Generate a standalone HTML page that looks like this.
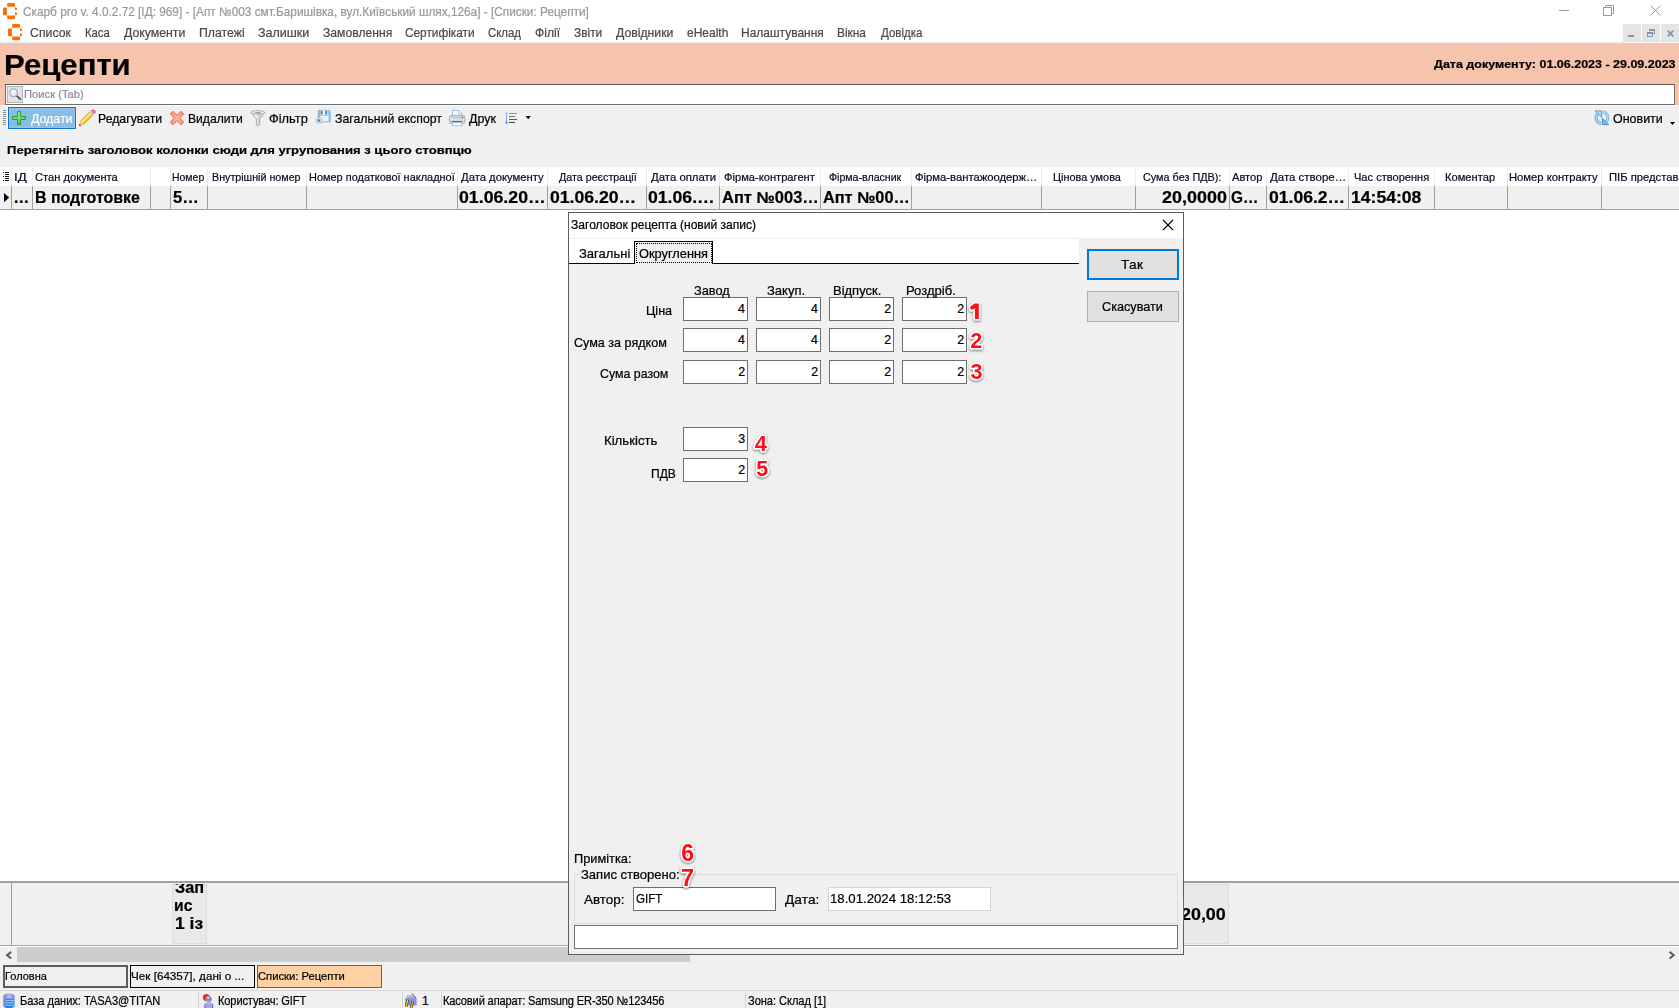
<!DOCTYPE html>
<html lang="uk"><head><meta charset="utf-8"><title>Скарб pro</title>
<style>
html,body{margin:0;padding:0;}
body{width:1679px;height:1008px;position:relative;overflow:hidden;background:#f0f0f0;font-family:"Liberation Sans",sans-serif;font-size:12px;color:#000;}
div,span,svg{position:absolute;box-sizing:border-box;}
.t{white-space:pre;font-family:"Liberation Sans",sans-serif;-webkit-text-stroke:0.22px currentColor;}
#titlebar{left:0;top:0;width:1679px;height:22px;background:#fff;}
#menubar{left:0;top:22px;width:1679px;height:19px;background:#fff;}
#menusep{left:0;top:41px;width:1679px;height:2px;background:#f1f3f6;}
#banner{left:0;top:43px;width:1679px;height:62px;background:#f6c3ac;}
#search{left:5px;top:84px;width:1670px;height:21px;background:#fff;border:1px solid #6e6e6e;border-top-color:#5a5a5a;}
#sicon{left:7px;top:86px;width:16px;height:17px;background:#e4e4e4;border:1px solid #b4b4b4;}
#toolbar{left:0;top:105px;width:1679px;height:62px;background:#f0f0f0;border-top:1px solid #fafafa;}
#addbtn{left:8px;top:107px;width:68px;height:22px;background:#89bce6;border:1px solid #0873d6;box-shadow:inset 0 0 0 1px #96c4ea,0 0 0 1px #fbf8f3;}
#ghead{left:0;top:167px;width:1679px;height:19px;background:#fff;}
.hs{top:167px;width:1px;height:19px;background:#ececec;}
#grow{left:0;top:186px;width:1679px;height:24px;background:#f0f0f0;border-bottom:1px solid #a0a0a0;}
.rs{top:186px;width:1px;height:23px;background:#a0a0a0;}
#gwhite{left:0;top:210px;width:1679px;height:671px;background:#fff;}
#foot{left:0;top:881px;width:1679px;height:65px;background:#f0f0f0;border-top:2px solid #a0a0a0;border-bottom:1px solid #a8a8a8;}
.fc{background:#e7e9ea;border:1px solid #dcdcdc;}
#hscroll{left:0;top:946px;width:1679px;height:17px;background:#f0f0f0;border-top:1px solid #fbfbfb;}
#hthumb{left:17px;top:947px;width:673px;height:15px;background:#cdcdcd;}
.tab{top:965px;height:23px;background:#f0f0f0;}
#status{left:0;top:990px;width:1679px;height:18px;background:#f0f0f0;border-top:1px solid #d7d7d7;}
.ss{top:992px;width:1px;height:16px;background:#d2d2d2;}
.mdi{top:24px;height:18px;background:#e5e5e5;}
/* dialog */
#dlg{left:568px;top:212px;width:616px;height:743px;background:#f0f0f0;border:1px solid #5e5e5e;}
#dtitle{left:569px;top:213px;width:614px;height:25px;background:#fff;}
#dtabs{left:569px;top:238px;width:510px;height:25px;background:#fff;border-top:1px solid #efefef;}
#dtabline{left:569px;top:263px;width:510px;height:1px;background:#000;}
#tabsel{left:634px;top:241px;width:79px;height:23px;background:#f0f0f0;border:1px solid #000;border-bottom:none;}
#tabfocus{left:636px;top:243px;width:76px;height:20px;border:1px dotted #000;border-radius:1px;}
.in{width:65px;height:24px;background:#fff;border:1px solid #6e6e6e;}
.btn{left:1087px;width:92px;height:31px;background:#e1e1e1;border:1px solid #adadad;}
.num{font-weight:700;color:#ee1c25;text-shadow:-1px -1px 0 #fff,1px -1px 0 #fff,-1px 1px 0 #fff,1px 1px 0 #fff,0 -1.5px 0 #fff,0 1.5px 0 #fff,-1.5px 0 0 #fff,1.5px 0 0 #fff,1px 2.5px 2px rgba(0,0,0,.45);}
.numsvg{filter:drop-shadow(0.5px 1.6px 1.1px rgba(0,0,0,.5));overflow:visible;}

</style></head>
<body>
<div id="titlebar"></div>
<div id="menubar"></div>
<div id="menusep"></div>
<div id="banner"></div>
<div id="search"></div>
<div id="sicon"></div>
<div id="toolbar"></div>
<div id="addbtn"></div>
<div id="ghead"></div>
<div id="grow"></div>
<div id="gwhite"></div>
<div class="hs" style="left:11px"></div><div class="rs" style="left:11px"></div><div class="hs" style="left:32px"></div><div class="rs" style="left:32px"></div><div class="hs" style="left:150px"></div><div class="rs" style="left:150px"></div><div class="hs" style="left:170px"></div><div class="rs" style="left:170px"></div><div class="hs" style="left:207px"></div><div class="rs" style="left:207px"></div><div class="hs" style="left:306px"></div><div class="rs" style="left:306px"></div><div class="hs" style="left:457px"></div><div class="rs" style="left:457px"></div><div class="hs" style="left:547px"></div><div class="rs" style="left:547px"></div><div class="hs" style="left:646px"></div><div class="rs" style="left:646px"></div><div class="hs" style="left:719px"></div><div class="rs" style="left:719px"></div><div class="hs" style="left:820px"></div><div class="rs" style="left:820px"></div><div class="hs" style="left:911px"></div><div class="rs" style="left:911px"></div><div class="hs" style="left:1041px"></div><div class="rs" style="left:1041px"></div><div class="hs" style="left:1135px"></div><div class="rs" style="left:1135px"></div><div class="hs" style="left:1229px"></div><div class="rs" style="left:1229px"></div><div class="hs" style="left:1266px"></div><div class="rs" style="left:1266px"></div><div class="hs" style="left:1348px"></div><div class="rs" style="left:1348px"></div><div class="hs" style="left:1434px"></div><div class="rs" style="left:1434px"></div><div class="hs" style="left:1507px"></div><div class="rs" style="left:1507px"></div><div class="hs" style="left:1601px"></div><div class="rs" style="left:1601px"></div>
<div id="foot"></div>
<div class="fc" style="left:172px;top:884px;width:35px;height:60px"></div>
<div class="fc" style="left:1140px;top:884px;width:89px;height:60px"></div>
<div style="left:11px;top:883px;width:1px;height:62px;background:#a0a0a0"></div>
<div id="hscroll"></div>
<div id="hthumb"></div>
<div class="tab" style="left:3px;width:125px;border:2px solid #5c5c5c"></div>
<div class="tab" style="left:130px;width:125px;border:1px solid #000"></div>
<div class="tab" style="left:257px;width:125px;background:#ffd1a2;border:1px solid #0b76d8;box-shadow:0 0 0 1px #fbf8f3"></div>
<div id="status"></div>
<div class="ss" style="left:198px"></div>
<div class="ss" style="left:402px"></div>
<div class="ss" style="left:441px"></div>
<div class="ss" style="left:745px"></div>
<div class="mdi" style="left:1623px;width:18px"></div>
<div class="mdi" style="left:1642px;width:18px"></div>
<div class="mdi" style="left:1661px;width:18px"></div>
<svg style="left:2.8px;top:2.8px" width="15" height="17" viewBox="0 0 15 17"><g fill="#ff6d00"><path d="M4.2 1.3Q4.2 0 5.5 0H10.7Q12 0 12 1.3V3.7H4.2Z"/><path d="M1.3 4.4H3.9V12.2H1.3Q0 12.2 0 10.9V5.7Q0 4.4 1.3 4.4Z"/><path d="M4.2 12.5H12V14.9Q12 16.2 10.7 16.2H5.5Q4.2 16.2 4.2 14.9Z"/><path d="M12 4.4H12.9Q14.2 4.4 14.2 5.7Q14.2 7 12.9 7H12Z"/><path d="M12 9.4H12.9Q14.2 9.4 14.2 10.8Q14.2 12.2 12.9 12.2H12Z"/></g></svg><svg style="left:7.85px;top:23.9px" width="15" height="17" viewBox="0 0 15 17"><g fill="#ff6d00"><path d="M4.2 1.3Q4.2 0 5.5 0H10.7Q12 0 12 1.3V3.7H4.2Z"/><path d="M1.3 4.4H3.9V12.2H1.3Q0 12.2 0 10.9V5.7Q0 4.4 1.3 4.4Z"/><path d="M4.2 12.5H12V14.9Q12 16.2 10.7 16.2H5.5Q4.2 16.2 4.2 14.9Z"/><path d="M12 4.4H12.9Q14.2 4.4 14.2 5.7Q14.2 7 12.9 7H12Z"/><path d="M12 9.4H12.9Q14.2 9.4 14.2 10.8Q14.2 12.2 12.9 12.2H12Z"/></g></svg><svg style="left:1559px;top:10px" width="11" height="1" viewBox="0 0 11 1"><rect width="10" height="1" fill="#9a9a9a"/></svg><svg style="left:1603px;top:5px" width="11" height="11" viewBox="0 0 11 11"><path d="M2.5 2.5V0.5H10.5V8.5H8.5" fill="none" stroke="#9a9a9a"/><rect x="0.5" y="2.5" width="8" height="8" fill="none" stroke="#9a9a9a"/></svg><svg style="left:1650px;top:5px" width="11" height="11" viewBox="0 0 11 11"><path d="M0.5 0.5L10.5 10.5M10.5 0.5L0.5 10.5" stroke="#9a9a9a" stroke-width="1" fill="none"/></svg><svg style="left:1628px;top:35px" width="6" height="2" viewBox="0 0 6 2"><rect width="6" height="2" fill="#8496ab"/></svg><svg style="left:1647px;top:29px" width="9" height="9" viewBox="0 0 9 9"><g fill="#8496ab"><rect x="2" y="0" width="6" height="2"/><rect x="7" y="0" width="1" height="5"/><rect x="6" y="4" width="2" height="1"/><rect x="0" y="3" width="6" height="2"/><rect x="0" y="3" width="1" height="5"/><rect x="5" y="3" width="1" height="5"/><rect x="0" y="7" width="6" height="1"/></g></svg><svg style="left:1667px;top:30px" width="7" height="7" viewBox="0 0 7 7"><path d="M0.7 0.7L6.3 6.3M6.3 0.7L0.7 6.3" stroke="#8496ab" stroke-width="1.9" fill="none"/></svg><svg style="left:7px;top:86px" width="16" height="17" viewBox="0 0 16 17"><defs><radialGradient id="mg" cx=".4" cy=".35" r=".7"><stop offset="0" stop-color="#fff"/><stop offset="1" stop-color="#cfdcf6"/></radialGradient></defs><path d="M10 10.2L13.3 13.2" stroke="#4a4a4a" stroke-width="1.8" stroke-linecap="round"/><circle cx="6.6" cy="6.7" r="4" fill="url(#mg)" stroke="#8e9db4" stroke-width="1"/></svg><div style="left:3px;top:110px;width:3px;height:1px;background:#8c8c8c"></div><div style="left:3px;top:112px;width:3px;height:1px;background:#8c8c8c"></div><div style="left:3px;top:114px;width:3px;height:1px;background:#8c8c8c"></div><div style="left:3px;top:116px;width:3px;height:1px;background:#8c8c8c"></div><div style="left:3px;top:118px;width:3px;height:1px;background:#8c8c8c"></div><div style="left:3px;top:120px;width:3px;height:1px;background:#8c8c8c"></div><div style="left:3px;top:122px;width:3px;height:1px;background:#8c8c8c"></div><div style="left:3px;top:124px;width:3px;height:1px;background:#8c8c8c"></div><svg style="left:12px;top:111px" width="14" height="14" viewBox="0 0 14 14"><defs><linearGradient id="pg" x1="0" y1="0" x2="0" y2="1"><stop offset="0" stop-color="#8ff08f"/><stop offset=".5" stop-color="#72d872"/><stop offset="1" stop-color="#35a835"/></linearGradient></defs><path d="M7 1.6V12.4M1.6 7H12.4" stroke="#1f8f1f" stroke-width="3.9" stroke-linecap="round" fill="none"/><path d="M7 1.9V12.1M1.9 7H12.1" stroke="url(#pg)" stroke-width="2.3" stroke-linecap="round" fill="none"/><path d="M7 1.9V12.1" stroke="#7fe47f" stroke-width="2.1" stroke-linecap="round" fill="none" opacity=".6"/></svg><svg style="left:78px;top:109px" width="18" height="18" viewBox="0 0 18 18"><g transform="translate(1,17) rotate(-45)"><path d="M0 0L4.2 -2.5V2.5Z" fill="#f6b898"/><path d="M0 0L1.9 -1.1V1.1Z" fill="#2d2d2d"/><rect x="4.2" y="-2.5" width="13" height="5" fill="#f5d232"/><rect x="4.2" y="-2.5" width="13" height="1" fill="#d9a91f"/><rect x="4.2" y="-1.5" width="13" height="1.1" fill="#fff6c8"/><rect x="4.2" y="1.5" width="13" height="1" fill="#d9a91f"/><rect x="17.2" y="-2.5" width="2.2" height="5" fill="#cfd3dc"/><path d="M17.9 -2.5V2.5M18.8 -2.5V2.5" stroke="#8f95a3" stroke-width=".4"/><path d="M19.4 -2.5H20.6Q22.4 -2.5 22.4 0Q22.4 2.5 20.6 2.5H19.4Z" fill="#f06e6e"/></g></svg><svg style="left:169px;top:110px" width="16" height="16" viewBox="0 0 16 16"><defs><radialGradient id="xg" cx=".5" cy=".5" r=".6"><stop offset="0" stop-color="#fdb7a3"/><stop offset="1" stop-color="#f58f78"/></radialGradient></defs><g transform="translate(8,8) rotate(45)" fill="url(#xg)" stroke="#e6664c" stroke-width=".9"><path d="M-7.7 -1.9H-1.9V-7.7H1.9V-1.9H7.7V1.9H1.9V7.7H-1.9V1.9H-7.7Z"/></g></svg><svg style="left:250px;top:110px" width="16" height="16" viewBox="0 0 16 16"><defs><linearGradient id="fg" x1="0" x2="1"><stop offset="0" stop-color="#f6f6f6"/><stop offset=".5" stop-color="#ececec"/><stop offset=".52" stop-color="#cfcfcf"/><stop offset="1" stop-color="#e4e4e4"/></linearGradient></defs><path d="M1.2 2.6L6.4 9V15.4H8.6Q9.7 15.2 9.7 13.8V9L14.8 2.6Z" fill="url(#fg)" stroke="#a3a3a3" stroke-width=".9" stroke-linejoin="round"/><ellipse cx="8" cy="2.4" rx="6.9" ry="1.7" fill="#fafafa" stroke="#a3a3a3" stroke-width=".9"/><ellipse cx="8" cy="2.7" rx="3.6" ry=".7" fill="#9a9a9a"/></svg><svg style="left:315px;top:109px" width="17" height="17" viewBox="0 0 17 17"><defs><linearGradient id="sg" x1="0" x2="1"><stop offset="0" stop-color="#909fd2"/><stop offset=".25" stop-color="#a9cbe8"/><stop offset=".8" stop-color="#9fd0ee"/><stop offset="1" stop-color="#6fc8f0"/></linearGradient></defs><path d="M3.2 1.2H14L15.4 2.6V13H3.2Z" fill="url(#sg)" stroke="#7fa6cc" stroke-width=".6"/><rect x="5" y="1.6" width="8" height="4" fill="#fbfbfd"/><rect x="5.5" y="1.8" width="2.1" height="3.6" fill="#3f86c6"/><rect x="10.2" y="1.8" width="2.1" height="3.6" fill="#3f86c6"/><rect x="5" y="7" width="8.4" height="5" fill="#fdfdfd" stroke="#c6d6e6" stroke-width=".4"/><path d="M6 8.6H12.4M6 10.2H12.4" stroke="#d9d9d9" stroke-width=".6"/><circle cx="3.9" cy="11.6" r="3" fill="#dfe4e9" stroke="#a9b3bd" stroke-width="1.3" stroke-dasharray="1.3 1.05"/><circle cx="3.9" cy="11.6" r="2.4" fill="#d5dbe1"/><circle cx="3.9" cy="11.6" r="1.25" fill="#3f7fbc"/></svg><svg style="left:448px;top:109px" width="18" height="18" viewBox="0 0 18 18"><defs><linearGradient id="prg" x1="0" y1="0" x2="0" y2="1"><stop offset="0" stop-color="#c4c4c4"/><stop offset=".45" stop-color="#ececec"/><stop offset=".7" stop-color="#d2d2d2"/><stop offset="1" stop-color="#e9e9e9"/></linearGradient></defs><path d="M4.4 1.4H10.6L13.6 4.4V7H4.4Z" fill="#fafdff" stroke="#8fbcea" stroke-width=".9"/><path d="M10.4 1.6V4.6H13.4" fill="#fff" stroke="#8fbcea" stroke-width=".8"/><rect x="1.4" y="6.4" width="15.4" height="8.2" rx="2" fill="url(#prg)" stroke="#a9a9a9" stroke-width=".9"/><rect x="4.2" y="6.9" width="9.6" height="3.4" fill="#cfcfcf"/><rect x="3.6" y="12" width="10.8" height="1.5" fill="#6e6e6e"/><rect x="4.4" y="13.6" width="9.4" height="3.2" fill="#fdfeff" stroke="#8fbcea" stroke-width=".9"/><circle cx="14.4" cy="8.6" r=".75" fill="#4a4a4a"/></svg><svg style="left:503px;top:111px" width="15" height="14" viewBox="0 0 15 14"><defs><linearGradient id="lg" x1="0" y1="0" x2="0" y2="1"><stop offset="0" stop-color="#9a9a9a"/><stop offset="1" stop-color="#3c3c3c"/></linearGradient><linearGradient id="ag" x1="0" y1="0" x2="0" y2="1"><stop offset="0" stop-color="#9fc2f0"/><stop offset="1" stop-color="#6c8fe0"/></linearGradient></defs><rect x="3" y="1.5" width="1" height="11" fill="url(#ag)"/><path d="M3.5 0.4L5.2 2.8H1.8Z" fill="#9fc2f0"/><path d="M3.5 13.6L5.2 11.2H1.8Z" fill="#6c8fe0"/><rect x="6" y="2" width="8" height="1" fill="#939393"/><rect x="6" y="5" width="6" height="1" fill="#797979"/><rect x="6" y="8" width="8" height="1" fill="#5c5c5c"/><rect x="6" y="11" width="6" height="1" fill="#424242"/></svg><svg style="left:525px;top:116px" width="7" height="4" viewBox="0 0 7 4"><path d="M0.6 0H5.8L3.2 3.3Z" fill="#000"/></svg><svg style="left:1594px;top:110px" width="16" height="16" viewBox="0 0 16 16"><path d="M7.2 13.6Q1.6 12.2 2.2 6.6Q2.6 4.6 4.2 3.4" fill="none" stroke="#6fa8de" stroke-width="3.2"/><path d="M7.2 13.6Q1.6 12.2 2.2 6.6Q2.6 4.6 4.2 3.4" fill="none" stroke="#aad6f8" stroke-width="1.6"/><path d="M1.2 1H7.6V7.4Z" fill="#a6dcfb" stroke="#4f8fd2" stroke-width=".9" stroke-linejoin="round"/><path d="M8.6 1.8Q14.4 3.4 13.6 9Q13.2 10.8 11.8 12" fill="none" stroke="#7db1e2" stroke-width="3.2"/><path d="M8.6 1.8Q14.4 3.4 13.6 9Q13.2 10.8 11.8 12" fill="none" stroke="#b9dcf6" stroke-width="1.6"/><path d="M8.4 8.4V14.6H14.8Z" fill="#5fc8fb" stroke="#4a86c8" stroke-width=".9" stroke-linejoin="round"/></svg><svg style="left:1670px;top:122px" width="6" height="3" viewBox="0 0 6 3"><path d="M0 0H5L2.5 3Z" fill="#000"/></svg><svg style="left:3px;top:172px" width="6" height="9" viewBox="0 0 6 9"><path d="M0 0.5H1M2 0.5H6M2 2.5H6M0 4.5H1M2 4.5H6M2 6.5H6M0 8.5H1M2 8.5H6" stroke="#111" stroke-width="1" shape-rendering="crispEdges"/></svg><svg style="left:4px;top:193px" width="6" height="10" viewBox="0 0 6 10"><path d="M0 0L5.2 4.6L0 9.2Z" fill="#000"/></svg><svg style="left:4.5px;top:950.5px" width="8" height="9" viewBox="0 0 8 9"><path d="M6.2 0.9L2.1 4.2L6.2 7.5" fill="none" stroke="#5a5a5a" stroke-width="2"/></svg><svg style="left:1667.8px;top:950.5px" width="8" height="9" viewBox="0 0 8 9"><path d="M1.6 0.9L5.7 4.2L1.6 7.5" fill="none" stroke="#5a5a5a" stroke-width="2"/></svg><svg style="left:3px;top:993px" width="13" height="15" viewBox="0 0 13 15"><defs><linearGradient id="dbg" x1="0" x2="1"><stop offset="0" stop-color="#6d7fc4"/><stop offset=".5" stop-color="#b9c0e6"/><stop offset="1" stop-color="#7f86c8"/></linearGradient></defs><path d="M0.6 3.2V13.2Q2 15.4 6 15.4Q10.4 15.2 11.6 13.2V3.2Z" fill="#2f7fe0"/><path d="M0.6 5H11.6M0.6 7.4H11.6M0.6 9.8H11.6M0.6 12.2H11.6" stroke="#9fd0ff" stroke-width="1"/><path d="M0.6 3.2V13.4L2.4 14.6V4Z" fill="#7d86c8"/><ellipse cx="6.1" cy="3" rx="5.5" ry="2.3" fill="url(#dbg)" stroke="#8f96cc" stroke-width=".5"/></svg><svg style="left:202px;top:993px" width="13" height="15" viewBox="0 0 13 15"><circle cx="4.4" cy="4.4" r="3.5" fill="#ee2a0c"/><circle cx="6.8" cy="6.2" r="3.1" fill="#8f9ae6"/><path d="M4.6 5.2Q6.8 3.4 9 5.2L8.6 7H5Z" fill="#6e7cd8"/><circle cx="6.2" cy="4.8" r="1.1" fill="#dfe3fb"/><path d="M5 8.4Q6.6 10.6 8.4 8.4L7.6 10.4H5.8Z" fill="#f19a3e"/><path d="M2.4 15V12Q2.6 9.8 5.2 9.6L6.7 10.8L8.2 9.6Q11 9.8 11.2 12V15Z" fill="#a4a9ec"/><path d="M2.4 15V12.4Q2.6 11 3.6 10.6V15ZM11.2 15V12.4Q11 11 10 10.6V15Z" fill="#6c76d4"/></svg><svg style="left:404px;top:992px" width="15" height="16" viewBox="0 0 15 16"><path d="M1.4 6.6L3.6 3H8.2L12.6 6.6V13.6H1.4Z" fill="#8d90dc"/><path d="M1.4 6.6L3.6 3H8.2L12.6 6.6Q7 4.6 1.4 6.6Z" fill="#babcf0"/><path d="M8.2 1.4L9.4 3.6L12.2 6" fill="none" stroke="#3a3a4a" stroke-width=".8"/><path d="M3.8 7.6L2.2 14.6" stroke="#23231a" stroke-width="2.6"/><path d="M3.8 7.6L2.2 14.6" stroke="#ffd83a" stroke-width="1.4"/><path d="M8.8 9.6L7 16" stroke="#23231a" stroke-width="2.6"/><path d="M8.8 9.6L7 16" stroke="#ffc21f" stroke-width="1.4"/></svg>
<div id="dlg"></div>
<div id="dtitle"></div>
<div id="dtabs"></div>
<div id="dtabline"></div>
<div id="tabsel"></div>
<div id="tabfocus"></div>
<div class="in" style="left:683px;top:297px"></div><div class="in" style="left:756px;top:297px"></div><div class="in" style="left:829px;top:297px"></div><div class="in" style="left:902px;top:297px"></div><div class="in" style="left:683px;top:328px"></div><div class="in" style="left:756px;top:328px"></div><div class="in" style="left:829px;top:328px"></div><div class="in" style="left:902px;top:328px"></div><div class="in" style="left:683px;top:360px"></div><div class="in" style="left:756px;top:360px"></div><div class="in" style="left:829px;top:360px"></div><div class="in" style="left:902px;top:360px"></div><div class="in" style="left:683px;top:427px"></div><div class="in" style="left:683px;top:458px"></div><div class="btn" style="top:249px;border:2px solid #0078d7"></div><div class="btn" style="top:291px"></div><svg style="left:1162px;top:219px" width="12" height="12" viewBox="0 0 12 12"><path d="M1 1L11 11M11 1L1 11" stroke="#000" stroke-width="1.1" fill="none"/></svg><div style="left:574px;top:874px;width:604px;height:50px;border:1px solid #dcdcdc"></div><div style="left:580px;top:872px;width:101px;height:5px;background:#f0f0f0"></div><div class="in" style="left:633px;top:887px;width:143px"></div><div class="in" style="left:828px;top:887px;width:163px;border-color:#d4d4d4"></div><div class="in" style="left:574px;top:925px;width:604px;border-color:#707070"></div>

<div id="texts">
<span class="t" style="left:23.00px;top:4px;font-size:12.2px;line-height:16px;height:16px;color:#999999;transform:scaleX(0.9694);transform-origin:0 0;">Скарб pro v. 4.0.2.72 [ІД: 969] - [Апт №003 смт.Баришівка, вул.Київський шлях,126а] - [Списки: Рецепти]</span>
<span class="t" style="left:29.97px;top:25px;font-size:12.2px;line-height:16px;height:16px;color:#4a4a4a;transform:scaleX(1.0103);transform-origin:0 0;">Список</span>
<span class="t" style="left:84.67px;top:25px;font-size:12.2px;line-height:16px;height:16px;color:#4a4a4a;transform:scaleX(0.9243);transform-origin:0 0;">Каса</span>
<span class="t" style="left:123.91px;top:25px;font-size:12.2px;line-height:16px;height:16px;color:#4a4a4a;transform:scaleX(1.0077);transform-origin:0 0;">Документи</span>
<span class="t" style="left:198.60px;top:25px;font-size:12.2px;line-height:16px;height:16px;color:#4a4a4a;transform:scaleX(1.0065);transform-origin:0 0;">Платежі</span>
<span class="t" style="left:257.59px;top:25px;font-size:12.2px;line-height:16px;height:16px;color:#4a4a4a;transform:scaleX(1.0260);transform-origin:0 0;">Залишки</span>
<span class="t" style="left:322.60px;top:25px;font-size:12.2px;line-height:16px;height:16px;color:#4a4a4a;transform:scaleX(0.9971);transform-origin:0 0;">Замовлення</span>
<span class="t" style="left:404.80px;top:25px;font-size:12.2px;line-height:16px;height:16px;color:#4a4a4a;transform:scaleX(0.9708);transform-origin:0 0;">Сертифікати</span>
<span class="t" style="left:487.82px;top:25px;font-size:12.2px;line-height:16px;height:16px;color:#4a4a4a;transform:scaleX(0.9349);transform-origin:0 0;">Склад</span>
<span class="t" style="left:534.70px;top:25px;font-size:12.2px;line-height:16px;height:16px;color:#4a4a4a;transform:scaleX(0.9936);transform-origin:0 0;">Філії</span>
<span class="t" style="left:573.61px;top:25px;font-size:12.2px;line-height:16px;height:16px;color:#4a4a4a;transform:scaleX(0.9751);transform-origin:0 0;">Звіти</span>
<span class="t" style="left:615.91px;top:25px;font-size:12.2px;line-height:16px;height:16px;color:#4a4a4a;transform:scaleX(1.0035);transform-origin:0 0;">Довідники</span>
<span class="t" style="left:686.89px;top:25px;font-size:12.2px;line-height:16px;height:16px;color:#4a4a4a;transform:scaleX(0.9829);transform-origin:0 0;">eHealth</span>
<span class="t" style="left:741.42px;top:25px;font-size:12.2px;line-height:16px;height:16px;color:#4a4a4a;transform:scaleX(0.9831);transform-origin:0 0;">Налаштування</span>
<span class="t" style="left:837.42px;top:25px;font-size:12.2px;line-height:16px;height:16px;color:#4a4a4a;transform:scaleX(0.9764);transform-origin:0 0;">Вікна</span>
<span class="t" style="left:880.92px;top:25px;font-size:12.2px;line-height:16px;height:16px;color:#4a4a4a;transform:scaleX(0.9463);transform-origin:0 0;">Довідка</span>
<span class="t" style="left:4.42px;top:43px;font-size:29px;line-height:44px;height:44px;font-weight:700;transform:scaleX(1.0717);transform-origin:0 0;">Рецепти</span>
<span class="t" style="left:1433.89px;top:56px;font-size:11.8px;line-height:16px;height:16px;font-weight:700;transform:scaleX(1.0583);transform-origin:0 0;">Дата документу: 01.06.2023 - 29.09.2023</span>
<span class="t" style="left:23.69px;top:86px;font-size:11.2px;line-height:16px;height:16px;color:#8a8a9c;transform:scaleX(1.0036);transform-origin:0 0;">Поиск (Tab)</span>
<span class="t" style="left:30.91px;top:111px;font-size:12.6px;line-height:16px;height:16px;color:#fff;transform:scaleX(0.9804);transform-origin:0 0;">Додати</span>
<span class="t" style="left:97.99px;top:111px;font-size:12.6px;line-height:16px;height:16px;transform:scaleX(0.9736);transform-origin:0 0;">Редагувати</span>
<span class="t" style="left:188.01px;top:111px;font-size:12.6px;line-height:16px;height:16px;transform:scaleX(0.9625);transform-origin:0 0;">Видалити</span>
<span class="t" style="left:269.26px;top:111px;font-size:12.6px;line-height:16px;height:16px;transform:scaleX(1.0186);transform-origin:0 0;">Фільтр</span>
<span class="t" style="left:334.60px;top:111px;font-size:12.6px;line-height:16px;height:16px;transform:scaleX(0.9752);transform-origin:0 0;">Загальний експорт</span>
<span class="t" style="left:468.91px;top:111px;font-size:12.6px;line-height:16px;height:16px;transform:scaleX(0.9865);transform-origin:0 0;">Друк</span>
<span class="t" style="left:1613.41px;top:111px;font-size:12.6px;line-height:16px;height:16px;transform:scaleX(0.9895);transform-origin:0 0;">Оновити</span>
<span class="t" style="left:7.43px;top:142px;font-size:11.8px;line-height:16px;height:16px;font-weight:700;transform:scaleX(1.1063);transform-origin:0 0;">Перетягніть заголовок колонки сюди для угрупования з цього стовпцю</span>
<span class="t" style="left:14.07px;top:169px;font-size:11.6px;line-height:16px;height:16px;letter-spacing:0.126px;color:#0a0a24;transform:scaleX(1.1500);transform-origin:0 0;">ІД</span>
<span class="t" style="left:35.23px;top:169px;font-size:11.6px;line-height:16px;height:16px;color:#0a0a24;transform:scaleX(0.9607);transform-origin:0 0;">Стан документа</span>
<span class="t" style="left:172.44px;top:169px;font-size:11.6px;line-height:16px;height:16px;color:#0a0a24;transform:scaleX(0.9022);transform-origin:0 0;">Номер</span>
<span class="t" style="left:212.42px;top:169px;font-size:11.6px;line-height:16px;height:16px;color:#0a0a24;transform:scaleX(0.9225);transform-origin:0 0;">Внутрішній номер</span>
<span class="t" style="left:308.60px;top:169px;font-size:11.6px;line-height:16px;height:16px;color:#0a0a24;transform:scaleX(0.9442);transform-origin:0 0;">Номер податкової накладної</span>
<span class="t" style="left:461.12px;top:169px;font-size:11.6px;line-height:16px;height:16px;color:#0a0a24;transform:scaleX(0.9726);transform-origin:0 0;">Дата документу</span>
<span class="t" style="left:558.62px;top:169px;font-size:11.6px;line-height:16px;height:16px;color:#0a0a24;transform:scaleX(0.9232);transform-origin:0 0;">Дата реєстрації</span>
<span class="t" style="left:650.62px;top:169px;font-size:11.6px;line-height:16px;height:16px;color:#0a0a24;transform:scaleX(0.9821);transform-origin:0 0;">Дата оплати</span>
<span class="t" style="left:723.86px;top:169px;font-size:11.6px;line-height:16px;height:16px;color:#0a0a24;transform:scaleX(0.9611);transform-origin:0 0;">Фірма-контрагент</span>
<span class="t" style="left:829.39px;top:169px;font-size:11.6px;line-height:16px;height:16px;color:#0a0a24;transform:scaleX(0.9150);transform-origin:0 0;">Фірма-власник</span>
<span class="t" style="left:914.85px;top:169px;font-size:11.6px;line-height:16px;height:16px;color:#0a0a24;transform:scaleX(0.9710);transform-origin:0 0;">Фірма-вантажоодерж…</span>
<span class="t" style="left:1053.11px;top:169px;font-size:11.6px;line-height:16px;height:16px;color:#0a0a24;transform:scaleX(0.9395);transform-origin:0 0;">Цінова умова</span>
<span class="t" style="left:1143.15px;top:169px;font-size:11.6px;line-height:16px;height:16px;color:#0a0a24;transform:scaleX(0.9335);transform-origin:0 0;">Сума без ПДВ):</span>
<span class="t" style="left:1232.48px;top:169px;font-size:11.6px;line-height:16px;height:16px;color:#0a0a24;transform:scaleX(0.9614);transform-origin:0 0;">Автор</span>
<span class="t" style="left:1269.92px;top:169px;font-size:11.6px;line-height:16px;height:16px;color:#0a0a24;transform:scaleX(0.9893);transform-origin:0 0;">Дата створе…</span>
<span class="t" style="left:1353.64px;top:169px;font-size:11.6px;line-height:16px;height:16px;color:#0a0a24;transform:scaleX(0.9540);transform-origin:0 0;">Час створення</span>
<span class="t" style="left:1445.09px;top:169px;font-size:11.6px;line-height:16px;height:16px;color:#0a0a24;transform:scaleX(0.9613);transform-origin:0 0;">Коментар</span>
<span class="t" style="left:1509.08px;top:169px;font-size:11.6px;line-height:16px;height:16px;color:#0a0a24;transform:scaleX(0.9676);transform-origin:0 0;">Номер контракту</span>
<span class="t" style="left:1609.09px;top:169px;font-size:11.6px;line-height:16px;height:16px;color:#0a0a24;transform:scaleX(0.9694);transform-origin:0 0;">ПІБ представник</span>
<span class="t" style="left:13.24px;top:186px;font-size:16px;line-height:24px;height:24px;font-weight:700;">…</span>
<span class="t" style="left:34.54px;top:186px;font-size:16px;line-height:24px;height:24px;font-weight:700;transform:scaleX(0.9948);transform-origin:0 0;">В подготовке</span>
<span class="t" style="left:172.79px;top:186px;font-size:16px;line-height:24px;height:24px;font-weight:700;transform:scaleX(1.0357);transform-origin:0 0;">5…</span>
<span class="t" style="left:459.30px;top:186px;font-size:16px;line-height:24px;height:24px;font-weight:700;transform:scaleX(1.1077);transform-origin:0 0;">01.06.20…</span>
<span class="t" style="left:549.80px;top:186px;font-size:16px;line-height:24px;height:24px;font-weight:700;transform:scaleX(1.1011);transform-origin:0 0;">01.06.20…</span>
<span class="t" style="left:648.30px;top:186px;font-size:16px;line-height:24px;height:24px;font-weight:700;transform:scaleX(1.1027);transform-origin:0 0;">01.06.…</span>
<span class="t" style="left:722.09px;top:186px;font-size:16px;line-height:24px;height:24px;font-weight:700;transform:scaleX(1.0292);transform-origin:0 0;">Апт №003…</span>
<span class="t" style="left:822.59px;top:186px;font-size:16px;line-height:24px;height:24px;font-weight:700;transform:scaleX(1.0190);transform-origin:0 0;">Апт №00…</span>
<span class="t" style="left:1161.88px;top:186px;font-size:16px;line-height:24px;height:24px;font-weight:700;transform:scaleX(1.1214);transform-origin:0 0;">20,0000</span>
<span class="t" style="left:1231.37px;top:186px;font-size:16px;line-height:24px;height:24px;font-weight:700;transform:scaleX(0.9624);transform-origin:0 0;">G…</span>
<span class="t" style="left:1268.81px;top:186px;font-size:16px;line-height:24px;height:24px;font-weight:700;transform:scaleX(1.0980);transform-origin:0 0;">01.06.2…</span>
<span class="t" style="left:1350.89px;top:186px;font-size:16px;line-height:24px;height:24px;font-weight:700;transform:scaleX(1.0984);transform-origin:0 0;">14:54:08</span>
<span class="t" style="left:174.63px;top:876px;font-size:16px;line-height:24px;height:24px;font-weight:700;transform:scaleX(1.0181);transform-origin:0 0;">Зап</span>
<span class="t" style="left:174.41px;top:894px;font-size:16px;line-height:24px;height:24px;font-weight:700;transform:scaleX(0.9792);transform-origin:0 0;">ис</span>
<span class="t" style="left:174.70px;top:912px;font-size:16px;line-height:24px;height:24px;font-weight:700;transform:scaleX(1.0911);transform-origin:0 0;">1 із</span>
<span class="t" style="left:1181.38px;top:903px;font-size:16px;line-height:24px;height:24px;font-weight:700;transform:scaleX(1.1177);transform-origin:0 0;">20,00</span>
<span class="t" style="left:5.09px;top:968px;font-size:11.6px;line-height:16px;height:16px;transform:scaleX(0.9514);transform-origin:0 0;">Головна</span>
<span class="t" style="left:131.29px;top:968px;font-size:11.6px;line-height:16px;height:16px;transform:scaleX(1.0075);transform-origin:0 0;">Чек [64357], дані о ...</span>
<span class="t" style="left:258.43px;top:968px;font-size:11.6px;line-height:16px;height:16px;transform:scaleX(0.9692);transform-origin:0 0;">Списки: Рецепти</span>
<span class="t" style="left:19.89px;top:993px;font-size:12.2px;line-height:16px;height:16px;letter-spacing:-0.033px;transform:scaleX(0.9091);transform-origin:0 0;">База даних: TASA3@TITAN</span>
<span class="t" style="left:218.09px;top:993px;font-size:12.2px;line-height:16px;height:16px;letter-spacing:-0.141px;transform:scaleX(0.9091);transform-origin:0 0;">Користувач: GIFT</span>
<span class="t" style="left:422.07px;top:993px;font-size:12.2px;line-height:16px;height:16px;">1</span>
<span class="t" style="left:443.09px;top:993px;font-size:12.2px;line-height:16px;height:16px;letter-spacing:-0.161px;transform:scaleX(0.9091);transform-origin:0 0;">Касовий апарат: Samsung ER-350 №123456</span>
<span class="t" style="left:748.14px;top:993px;font-size:12.2px;line-height:16px;height:16px;letter-spacing:-0.047px;transform:scaleX(0.9091);transform-origin:0 0;">Зона: Склад [1]</span>
<span class="t" style="left:571.40px;top:217px;font-size:12.2px;line-height:16px;height:16px;transform:scaleX(0.9898);transform-origin:0 0;">Заголовок рецепта (новий запис)</span>
<span class="t" style="left:578.57px;top:246px;font-size:12.4px;line-height:16px;height:16px;transform:scaleX(1.0515);transform-origin:0 0;">Загальні</span>
<span class="t" style="left:638.89px;top:246px;font-size:12.4px;line-height:16px;height:16px;transform:scaleX(1.0333);transform-origin:0 0;">Округлення</span>
<span class="t" style="left:1121.49px;top:257px;font-size:12.4px;line-height:16px;height:16px;letter-spacing:0.265px;transform:scaleX(1.1000);transform-origin:0 0;">Так</span>
<span class="t" style="left:1101.66px;top:299px;font-size:12.4px;line-height:16px;height:16px;transform:scaleX(1.0225);transform-origin:0 0;">Скасувати</span>
<span class="t" style="left:694.38px;top:283px;font-size:12.4px;line-height:16px;height:16px;transform:scaleX(1.0309);transform-origin:0 0;">Завод</span>
<span class="t" style="left:766.57px;top:283px;font-size:12.4px;line-height:16px;height:16px;transform:scaleX(1.0505);transform-origin:0 0;">Закуп.</span>
<span class="t" style="left:832.93px;top:283px;font-size:12.4px;line-height:16px;height:16px;transform:scaleX(1.0473);transform-origin:0 0;">Відпуск.</span>
<span class="t" style="left:905.93px;top:283px;font-size:12.4px;line-height:16px;height:16px;transform:scaleX(1.0522);transform-origin:0 0;">Роздріб.</span>
<span class="t" style="left:646.26px;top:303px;font-size:12.4px;line-height:16px;height:16px;transform:scaleX(1.0189);transform-origin:0 0;">Ціна</span>
<span class="t" style="left:573.86px;top:335px;font-size:12.4px;line-height:16px;height:16px;transform:scaleX(1.0139);transform-origin:0 0;">Сума за рядком</span>
<span class="t" style="left:599.87px;top:366px;font-size:12.4px;line-height:16px;height:16px;transform:scaleX(0.9975);transform-origin:0 0;">Сума разом</span>
<span class="t" style="left:603.92px;top:433px;font-size:12.4px;line-height:16px;height:16px;transform:scaleX(1.0652);transform-origin:0 0;">Кількість</span>
<span class="t" style="left:651.42px;top:466px;font-size:12.4px;line-height:16px;height:16px;transform:scaleX(0.9748);transform-origin:0 0;">ПДВ</span>
<span class="t" style="left:738.07px;top:301px;font-size:12.4px;line-height:16px;height:16px;">4</span>
<span class="t" style="left:811.07px;top:301px;font-size:12.4px;line-height:16px;height:16px;">4</span>
<span class="t" style="left:884.33px;top:301px;font-size:12.4px;line-height:16px;height:16px;">2</span>
<span class="t" style="left:957.33px;top:301px;font-size:12.4px;line-height:16px;height:16px;">2</span>
<span class="t" style="left:738.07px;top:332px;font-size:12.4px;line-height:16px;height:16px;">4</span>
<span class="t" style="left:811.07px;top:332px;font-size:12.4px;line-height:16px;height:16px;">4</span>
<span class="t" style="left:884.33px;top:332px;font-size:12.4px;line-height:16px;height:16px;">2</span>
<span class="t" style="left:957.33px;top:332px;font-size:12.4px;line-height:16px;height:16px;">2</span>
<span class="t" style="left:738.33px;top:364px;font-size:12.4px;line-height:16px;height:16px;">2</span>
<span class="t" style="left:811.33px;top:364px;font-size:12.4px;line-height:16px;height:16px;">2</span>
<span class="t" style="left:884.33px;top:364px;font-size:12.4px;line-height:16px;height:16px;">2</span>
<span class="t" style="left:957.33px;top:364px;font-size:12.4px;line-height:16px;height:16px;">2</span>
<span class="t" style="left:738.25px;top:431px;font-size:12.4px;line-height:16px;height:16px;">3</span>
<span class="t" style="left:738.33px;top:462px;font-size:12.4px;line-height:16px;height:16px;">2</span>
<span class="t" style="left:573.86px;top:851px;font-size:12.4px;line-height:16px;height:16px;transform:scaleX(1.0326);transform-origin:0 0;">Примітка:</span>
<span class="t" style="left:581.07px;top:867px;font-size:12.4px;line-height:16px;height:16px;transform:scaleX(1.0513);transform-origin:0 0;">Запис створено:</span>
<span class="t" style="left:583.97px;top:892px;font-size:12.4px;line-height:16px;height:16px;transform:scaleX(1.0863);transform-origin:0 0;">Автор:</span>
<span class="t" style="left:635.72px;top:891px;font-size:12.4px;line-height:16px;height:16px;transform:scaleX(0.9337);transform-origin:0 0;">GIFT</span>
<span class="t" style="left:784.90px;top:892px;font-size:12.4px;line-height:16px;height:16px;letter-spacing:0.086px;transform:scaleX(1.1000);transform-origin:0 0;">Дата:</span>
<span class="t" style="left:830.49px;top:891px;font-size:12.4px;line-height:16px;height:16px;transform:scaleX(1.0651);transform-origin:0 0;">18.01.2024 18:12:53</span>
<svg class="numsvg" style="left:965.4px;top:296.5px" width="24" height="30" viewBox="0 0 24 30"><path d="M4.5 0H8.8V15.4H4.9V4.9L1 6.5L0 3.3Z" transform="translate(5,6.6)" fill="#fa0f1e" stroke="#fff" stroke-width="3.4" stroke-linejoin="round" paint-order="stroke"/></svg>
<svg class="numsvg" style="left:966.0px;top:326.0px" width="24" height="30" viewBox="0 0 24 30"><text x="4.25" y="22" font-family="Liberation Sans" font-weight="700" font-size="21.5px" fill="#fa0f1e" stroke="#fff" stroke-width="3.4" stroke-linejoin="round" paint-order="stroke">2</text></svg>
<svg class="numsvg" style="left:966.4px;top:356.5px" width="24" height="30" viewBox="0 0 24 30"><text x="4.51" y="22" font-family="Liberation Sans" font-weight="700" font-size="21.5px" fill="#fa0f1e" stroke="#fff" stroke-width="3.4" stroke-linejoin="round" paint-order="stroke">3</text></svg>
<svg class="numsvg" style="left:750.3px;top:428.5px" width="24" height="30" viewBox="0 0 24 30"><text x="4.67" y="22" font-family="Liberation Sans" font-weight="700" font-size="21.8px" fill="#fa0f1e" stroke="#fff" stroke-width="3.4" stroke-linejoin="round" paint-order="stroke">4</text></svg>
<svg class="numsvg" style="left:752.0px;top:454.0px" width="24" height="30" viewBox="0 0 24 30"><text x="4.34" y="22" font-family="Liberation Sans" font-weight="700" font-size="21.5px" fill="#fa0f1e" stroke="#fff" stroke-width="3.4" stroke-linejoin="round" paint-order="stroke">5</text></svg>
<svg class="numsvg" style="left:677.0px;top:838.5px" width="24" height="30" viewBox="0 0 24 30"><text x="4.16" y="22" font-family="Liberation Sans" font-weight="700" font-size="23px" fill="#fa0f1e" stroke="#fff" stroke-width="3.4" stroke-linejoin="round" paint-order="stroke">6</text></svg>
<svg class="numsvg" style="left:677.0px;top:864.0px" width="24" height="30" viewBox="0 0 24 30"><text x="3.99" y="22" font-family="Liberation Sans" font-weight="700" font-size="23.4px" fill="#fa0f1e" stroke="#fff" stroke-width="3.4" stroke-linejoin="round" paint-order="stroke">7</text></svg>
</div>
<div style="left:170px;top:883px;width:40px;height:1px;background:#f0f0f0"></div><div style="left:170px;top:881px;width:40px;height:2px;background:#a0a0a0"></div><div style="left:170px;top:860px;width:40px;height:21px;background:#fff"></div><div style="left:1179px;top:900px;width:4px;height:24px;background:#f0f0f0"></div><div style="left:1183px;top:900px;width:1px;height:24px;background:#6a6a6a"></div>
</body></html>
